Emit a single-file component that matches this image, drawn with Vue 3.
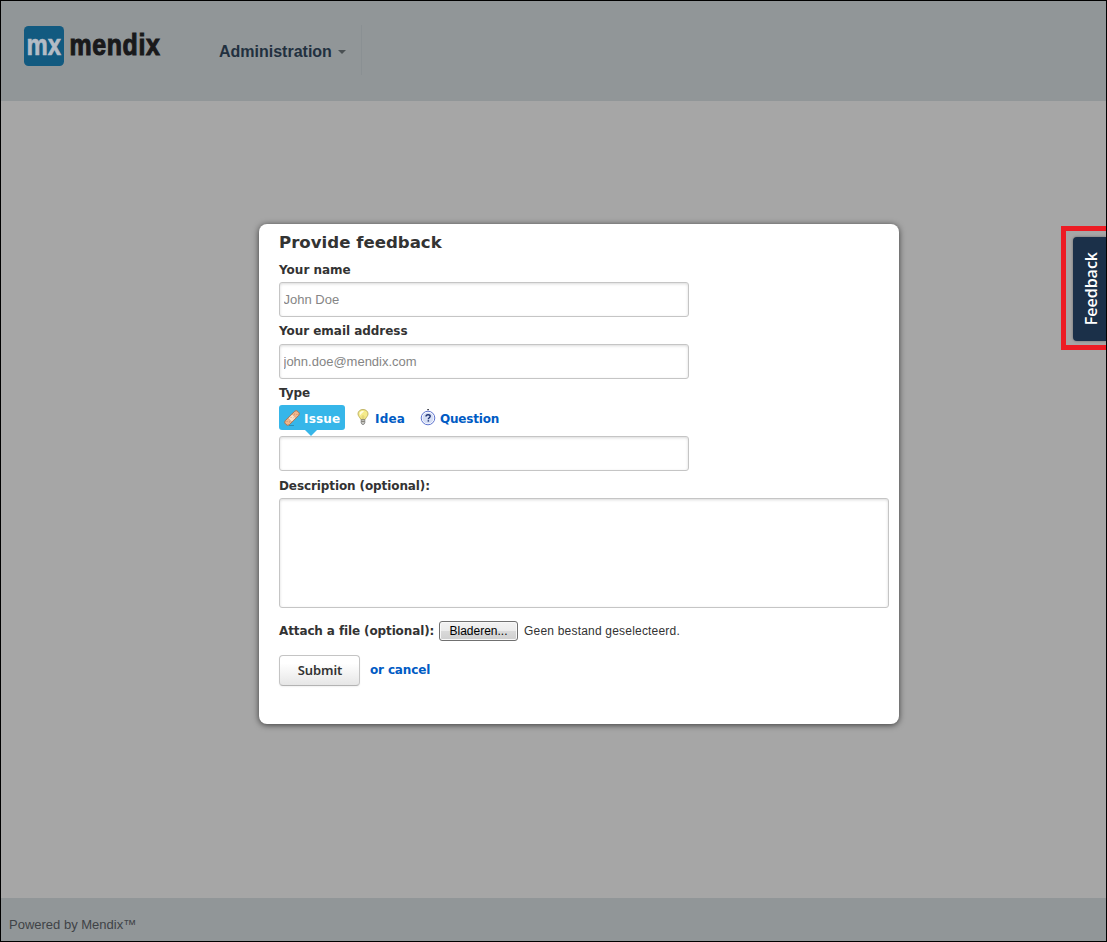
<script setup>
import { ref } from 'vue'

const type = ref('issue')
const name = ref('')
const email = ref('')
const subject = ref('')
const description = ref('')
</script>

<template>
  <div class="page">
    <header class="header">
      <svg class="logo" width="140" height="44" viewBox="0 0 140 44">
        <rect x="1" y="1" width="40" height="40" rx="4.5" fill="#125a80" />
        <text class="mark" x="3.5" y="29.5" textLength="34.5" lengthAdjust="spacingAndGlyphs">mx</text>
        <text class="wordmark" x="46.5" y="29.5" textLength="91" lengthAdjust="spacingAndGlyphs">mendix</text>
      </svg>
      <nav class="nav">
        <span class="nav-text">Administration</span>
        <svg class="caret" width="8" height="4" viewBox="0 0 8 4"><path d="M0 0h8L4 4z" fill="#4a5053" /></svg>
      </nav>
    </header>
    <main class="content"></main>
    <footer class="footer"><span class="powered">Powered by Mendix™</span></footer>

    <section class="dialog">
      <h1 class="title"><span class="title-text">Provide feedback</span></h1>
      <label class="label">Your name</label>
      <input v-model="name" class="field" placeholder="John Doe" />
      <label class="label second">Your email address</label>
      <input v-model="email" class="field" placeholder="john.doe@mendix.com" />
      <label class="label second">Type</label>
      <div class="tabs">
        <a class="tab issue" :class="{ active: type === 'issue' }" @click="type = 'issue'">
          <svg width="16" height="16" viewBox="0 0 16 16">
            <path d="M5 15.5h5" stroke="#2280a6" stroke-width="1" opacity=".7" />
            <g transform="rotate(-45 8 8)">
              <rect x="-.8" y="5.1" width="17.6" height="5.8" rx="2.5" fill="#f0b58c" stroke="#a5704f" stroke-width=".9" />
              <rect x="5" y="5.6" width="6" height="4.8" fill="#fbe0c8" />
              <path d="M5 5.3v5.4M11 5.3v5.4" stroke="#cc9068" stroke-width=".6" />
              <path d="M1.5 7h1M3 9h1M12 7h1M13.5 9h1M7 7h.8M8.8 9h.8" stroke="#b97a53" stroke-width=".8" />
            </g>
          </svg>
          <span>Issue</span>
        </a>
        <a class="tab idea" :class="{ active: type === 'idea' }" @click="type = 'idea'">
          <svg width="16" height="16" viewBox="0 0 16 16">
            <path d="M8 .5C5.1 .5 3 2.4 3 4.9c0 2.2 1.9 3.2 2.9 5.6h4.2C11.1 8.1 13 7.1 13 4.9 13 2.4 10.9.5 8 .5z" fill="#f6ec8b" stroke="#b9ac5c" stroke-width=".9" />
            <path d="M5 3.2C6 1.8 8 1.7 9 2.2 8 3 6.6 4.5 5.2 6.2c-.6-1-.7-2-.2-3z" fill="#fffde3" />
            <path d="M7.2 10.5V7.5l.8-1 .8 1v3" fill="none" stroke="#d3c066" stroke-width=".7" />
            <path d="M6.2 10.7h3.6v3.2L8.7 15.5H7.3L6.2 13.9z" fill="#c9c9c4" stroke="#777" stroke-width=".8" />
            <path d="M6.3 12.5h3.4" stroke="#77756c" stroke-width=".8" />
          </svg>
          <span>Idea</span>
        </a>
        <a class="tab question" :class="{ active: type === 'question' }" @click="type = 'question'">
          <svg width="16" height="17" viewBox="0 0 16 17">
            <path d="M7.2 .7h1.8" stroke="#20242e" stroke-width="1" />
            <circle cx="8" cy="9" r="6.8" fill="#fff" stroke="#5c73cf" stroke-width="1" />
            <circle cx="8" cy="9" r="5.6" fill="#d5def5" />
            <path d="M6 7.6C6 6.3 6.9 5.7 8.1 5.7c1.3 0 2.1.7 2.1 1.6 0 1.4-1.9 1.4-1.9 3" fill="none" stroke="#1f3473" stroke-width="1.4" />
            <rect x="7.6" y="11.2" width="1.5" height="1.4" fill="#1f3473" />
          </svg>
          <span>Question</span>
        </a>
      </div>
      <input v-model="subject" class="field" />
      <label class="label desc">Description (optional):</label>
      <textarea v-model="description" class="area"></textarea>
      <div class="file">
        <span class="file-label">Attach a file (optional):</span>
        <button class="browse"><span>Bladeren...</span></button>
        <span class="status">Geen bestand geselecteerd.</span>
      </div>
      <div class="actions">
        <button class="submit"><span>Submit</span></button>
        <a class="cancel">or cancel</a>
      </div>
    </section>

    <aside class="highlight">
      <div class="feedback"><span>Feedback</span></div>
    </aside>
  </div>
</template>

<style>
body {
  margin: 0;
}
</style>

<style scoped>
.page {
  position: relative;
  box-sizing: border-box;
  width: 1107px;
  height: 942px;
  display: flex;
  flex-direction: column;
  border: 1px solid #000;
  background: #a6a6a6;
  overflow: hidden;
  font-family: "Liberation Sans", Arial, sans-serif;
}
.header {
  height: 100px;
  box-sizing: border-box;
  display: flex;
  align-items: flex-start;
  padding: 24px 0 0 22px;
  background: #919698;
}
.logo {
  flex: none;
  overflow: visible;
}
.mark,
.wordmark {
  font-family: "Liberation Sans", Arial, sans-serif;
  font-weight: 700;
  font-size: 30px;
}
.mark {
  fill: #b4bcc5;
  stroke: #b4bcc5;
  stroke-width: 0.7;
}
.wordmark {
  fill: #19191b;
  stroke: #19191b;
  stroke-width: 1.1;
  letter-spacing: 0.8px;
}
.nav {
  display: flex;
  align-items: center;
  box-sizing: border-box;
  width: 143px;
  height: 50px;
  margin-left: 56px;
  border-right: 1px solid #8a9093;
}
.nav-text {
  font-size: 16px;
  font-weight: 700;
  line-height: 20px;
  color: #22303f;
  margin-top: 3px;
}
.caret {
  margin: 3px 0 0 6px;
}
.content {
  flex: 1;
}
.footer {
  height: 43px;
  background: #919698;
}
.powered {
  display: block;
  padding: 17px 0 0 8px;
  font-size: 13px;
  line-height: 20px;
  color: #3f4347;
}
.dialog {
  position: absolute;
  left: 258px;
  top: 223px;
  width: 640px;
  height: 500px;
  box-sizing: border-box;
  padding: 0 10px 0 20px;
  display: flex;
  flex-direction: column;
  align-items: flex-start;
  background: #fff;
  border-radius: 8px;
  box-shadow: 0 1px 6px rgba(0, 0, 0, 0.65);
  font-family: "DejaVu Sans", Verdana, sans-serif;
  color: #333;
}
.title {
  margin: 0;
  font-size: 16.6px;
  font-weight: 700;
  line-height: 37px;
  height: 36px;
}
.label {
  height: 20px;
  margin-bottom: 2px;
  font-size: 12px;
  font-weight: 700;
  line-height: 20px;
}
.second {
  margin-top: 4px;
  margin-bottom: 3px;
  letter-spacing: -0.04px;
}
.second + .tabs {
  margin-top: -1px;
}
.field,
.area {
  box-sizing: border-box;
  width: 410px;
  height: 35px;
  margin: 0;
  padding: 0 4px 0 3.5px;
  border: 1px solid #c5c5c5;
  border-radius: 3px;
  background: #fff;
  box-shadow: inset 0 1px 3px rgba(0, 0, 0, 0.15);
  font-family: "Liberation Sans", Arial, sans-serif;
  font-size: 13px;
  outline: none;
  resize: none;
}
.field::placeholder {
  color: #858585;
}
.area {
  width: 610px;
  height: 110px;
}
.tabs {
  display: flex;
  height: 25px;
  margin-bottom: 6px;
}
.tab {
  position: relative;
  display: flex;
  align-items: center;
  box-sizing: border-box;
  height: 25px;
  padding-left: 5px;
  border-radius: 3px;
  font-size: 12px;
  font-weight: 700;
  color: #005bc4;
  cursor: pointer;
}
.tab svg {
  margin-right: 4px;
}
.tab span {
  padding-top: 2px;
}
.issue {
  width: 66px;
  letter-spacing: 0.2px;
}
.idea {
  width: 65px;
  margin-left: 5px;
  letter-spacing: 0.2px;
}
.idea svg {
  margin-top: -2px;
}
.question {
  letter-spacing: -0.2px;
}
.question svg {
  margin-top: -1px;
}
.active {
  background: #36b6e9;
  color: #fff;
}
.active::after {
  content: "";
  position: absolute;
  left: 26px;
  top: 25px;
  border: 6px solid transparent;
  border-top-color: #36b6e9;
  border-bottom: 0;
}
.desc {
  margin-top: 5px;
  letter-spacing: -0.1px;
}
.file {
  display: flex;
  align-items: center;
  height: 20px;
  margin-top: 13px;
}
.file-label {
  width: 160px;
  font-size: 12px;
  font-weight: 700;
  letter-spacing: -0.12px;
  white-space: nowrap;
}
.browse {
  box-sizing: border-box;
  width: 79px;
  height: 20px;
  padding: 0;
  border: 1px solid #707070;
  border-radius: 3px;
  background: linear-gradient(#f2f2f2 0, #ebebeb 50%, #dadada 50%, #cfcfcf 100%);
  box-shadow: inset 0 0 0 1px #f8f8f8;
  font-family: "Liberation Sans", Arial, sans-serif;
  font-size: 12px;
  color: #000;
}
.status {
  margin-left: 6px;
  font-family: "Liberation Sans", Arial, sans-serif;
  font-size: 12px;
  letter-spacing: 0.2px;
  white-space: nowrap;
}
.actions {
  display: flex;
  margin-top: 14px;
}
.submit {
  box-sizing: border-box;
  width: 81px;
  height: 31px;
  padding: 0 0 2px 1px;
  border: 1px solid #c4c4c4;
  border-bottom-color: #b3b3b3;
  border-radius: 4px;
  background: linear-gradient(#fff 25%, #e6e6e6);
  box-shadow: 0 1px 2px rgba(0, 0, 0, 0.06);
  font-family: "Noto Sans", sans-serif;
  font-size: 13px;
  font-weight: 600;
  letter-spacing: -0.05px;
  color: #333;
}
.cancel {
  margin-left: 10px;
  font-size: 12px;
  font-weight: 700;
  line-height: 30px;
  letter-spacing: -0.15px;
  color: #005bc4;
}
.highlight {
  position: absolute;
  left: 1060px;
  top: 225px;
  width: 45px;
  height: 124px;
  box-sizing: border-box;
  padding: 6px 0 0 7px;
  border: 5px solid #ed1c24;
  border-right: 0;
}
.feedback {
  display: flex;
  align-items: center;
  justify-content: center;
  box-sizing: border-box;
  width: 33px;
  height: 104px;
  padding-left: 2px;
  background: #1b3049;
  border-radius: 4px 0 0 4px;
  box-shadow: 0 0 3px rgba(0, 0, 0, 0.35);
  color: #fff;
  font-family: "Open Sans", "Noto Sans", sans-serif;
  font-size: 16px;
  font-weight: 600;
}
.feedback span {
  writing-mode: vertical-rl;
  transform: rotate(180deg);
}
</style>
